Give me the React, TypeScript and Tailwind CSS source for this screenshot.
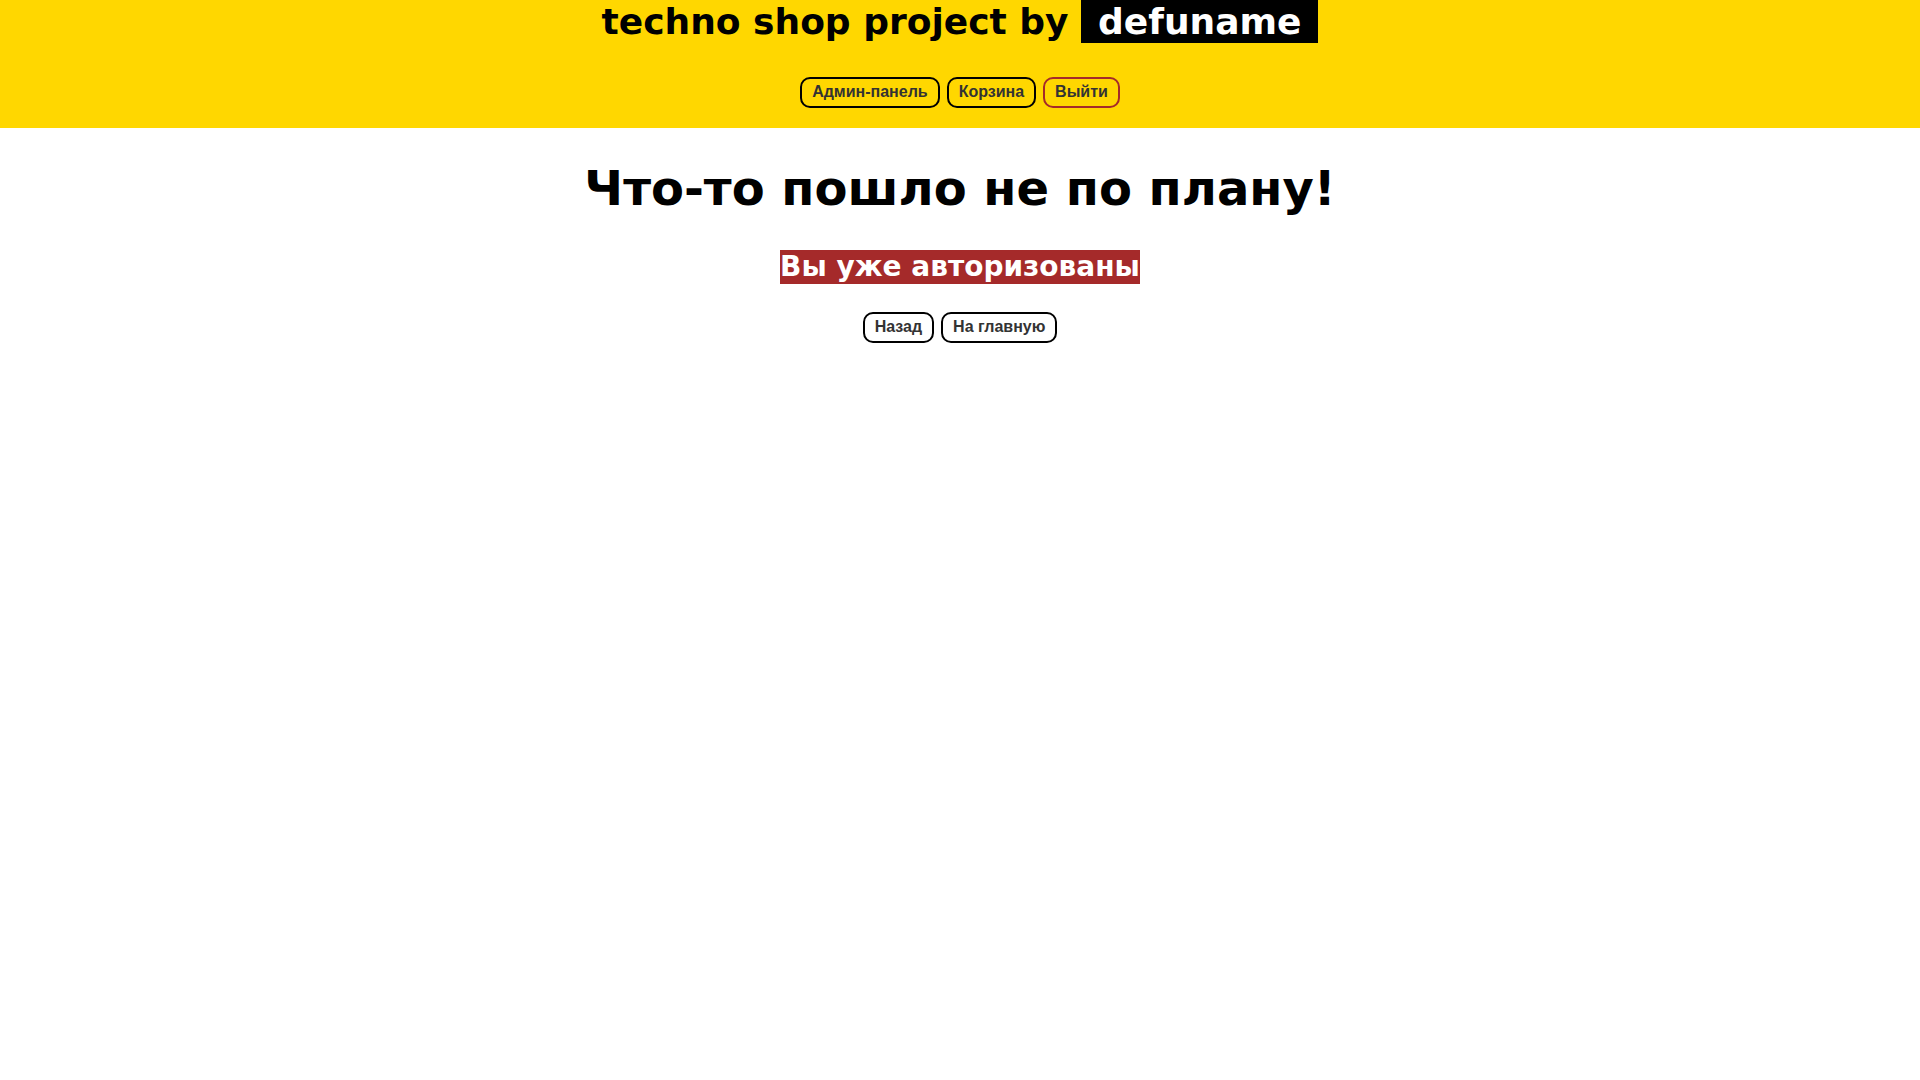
import React from 'react';

const sans = "font-['DejaVu_Sans',sans-serif]";
const btn =
  "font-['Liberation_Sans',Arial,sans-serif] font-bold text-[16px] leading-[19px] text-[#333] px-[10px] pt-[3px] pb-[5px] border-2 rounded-[10px] bg-transparent";

const NavButton = ({ label, danger }: { label: string; danger?: boolean }) => (
  <button className={`${btn} ${danger ? 'border-[#a52a2a]' : 'border-black'}`}>{label}</button>
);

export default function App() {
  return (
    <div className={`min-h-screen bg-white ${sans}`}>
      <header className="bg-[#ffd700] pb-[20px] flex flex-col items-center">
        <h1 className="text-[36px] leading-[43px] font-bold text-black">
          techno shop project by{' '}
          <span className="inline-block bg-black text-white px-[17px]">defuname</span>
        </h1>
        <nav className="mt-[34px] flex gap-[7px]">
          <NavButton label="Админ-панель" />
          <NavButton label="Корзина" />
          <NavButton label="Выйти" danger />
        </nav>
      </header>

      <main className="flex flex-col items-center">
        <h2 className="mt-[32px] text-[48px] leading-[56px] font-bold text-black">Что-то пошло не по плану!</h2>
        <p className="mt-[34px] bg-[#a52a2a] text-white text-[28px] leading-[34px] font-bold">Вы уже авторизованы</p>
        <div className="mt-[28px] flex gap-[7px]">
          <button className={`${btn} border-black`}>Назад</button>
          <button className={`${btn} border-black`}>На главную</button>
        </div>
      </main>
    </div>
  );
}
